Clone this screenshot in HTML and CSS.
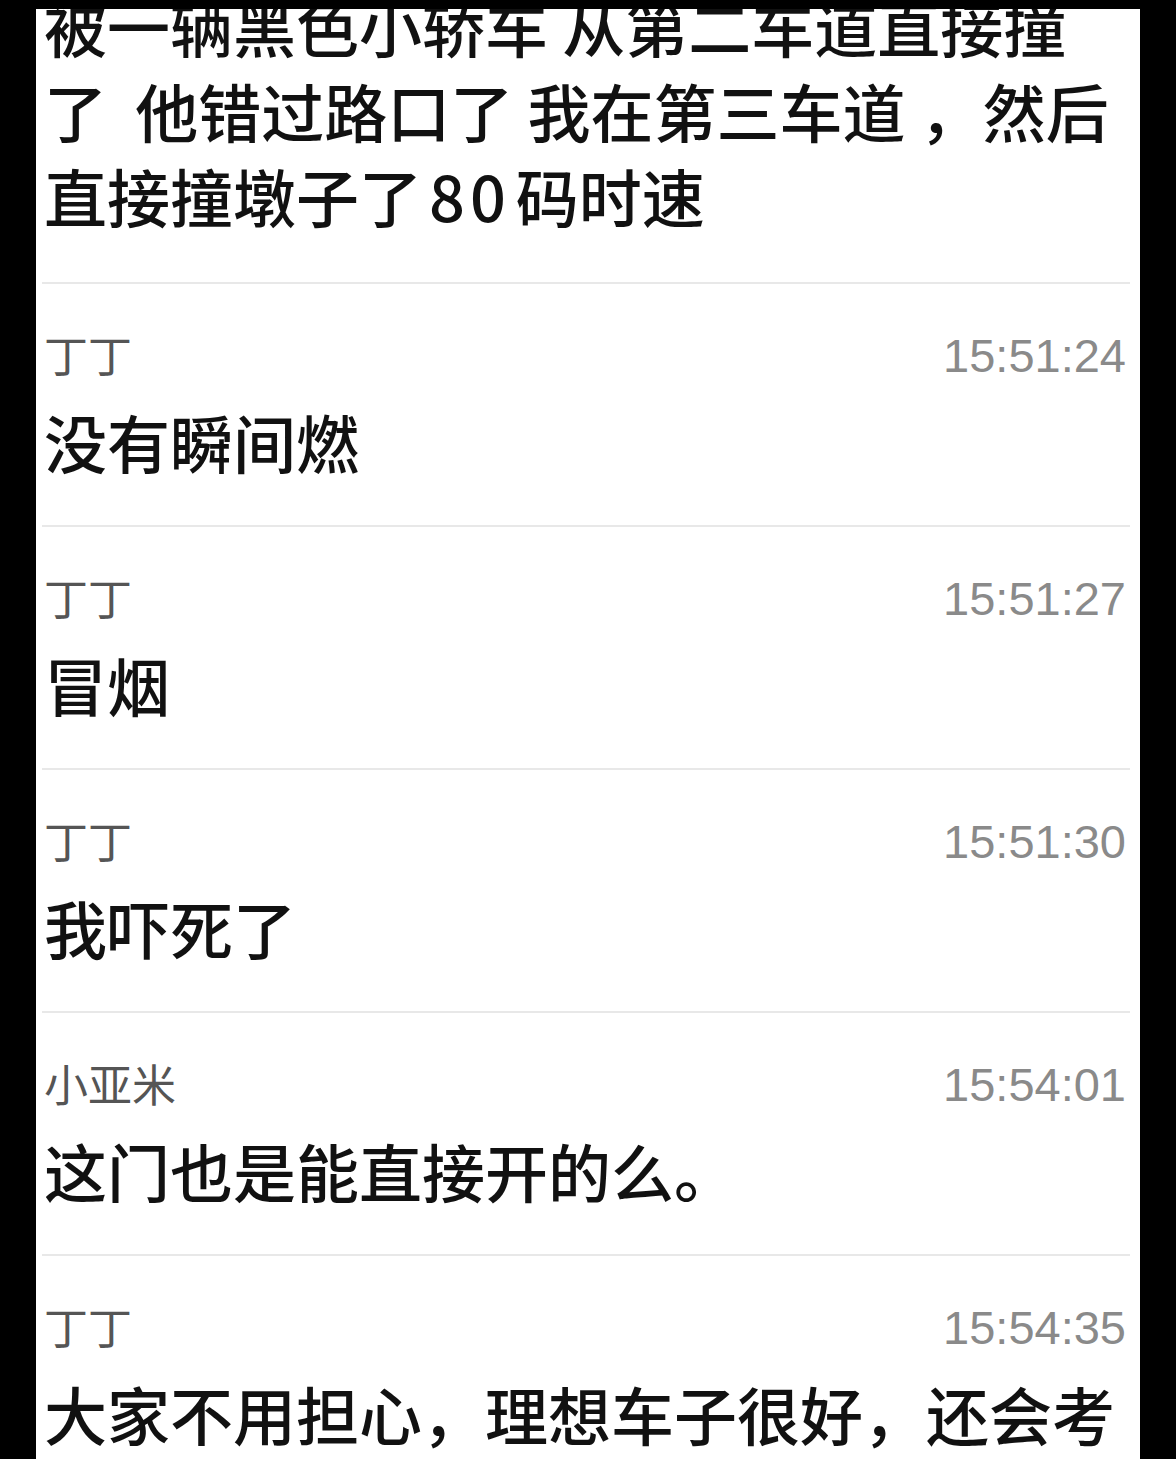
FILE: index.html
```html
<!DOCTYPE html>
<html lang="zh-CN">
<head>
<meta charset="utf-8">
<title>聊天记录</title>
<link rel="stylesheet" href="styles.css">
</head>
<body>
<div class="screen">
  <div class="first">
    <p class="text">被一辆黑色小轿车 从第二车道直接撞<br>了&nbsp; 他错过路口了 我在第三车道 ，然后<br>直接撞墩子了<span class="num">80</span>码时速</p>
  </div>
  <div class="msg">
    <div class="meta"><span class="name">丁丁</span><span class="time">15:51:24</span></div>
    <p class="text">没有瞬间燃</p>
  </div>
  <div class="msg">
    <div class="meta"><span class="name">丁丁</span><span class="time">15:51:27</span></div>
    <p class="text">冒烟</p>
  </div>
  <div class="msg">
    <div class="meta"><span class="name">丁丁</span><span class="time">15:51:30</span></div>
    <p class="text">我吓死了</p>
  </div>
  <div class="msg">
    <div class="meta"><span class="name">小亚米</span><span class="time">15:54:01</span></div>
    <p class="text">这门也是能直接开的么。</p>
  </div>
  <div class="msg">
    <div class="meta"><span class="name">丁丁</span><span class="time">15:54:35</span></div>
    <p class="text">大家不用担心，理想车子很好，还会考</p>
  </div>
</div>
</body>
</html>
```
FILE: styles.css
```css
html, body {
  margin: 0;
  padding: 0;
  background: #000;
}
body {
  width: 1176px;
  height: 1459px;
  overflow: hidden;
  padding-top: 9px;
  box-sizing: border-box;
}
.screen {
  margin-left: 36px;
  width: 1104px;
  height: 1450px;
  background: #fff;
  overflow: hidden;
  font-family: "Noto Sans CJK SC", "Noto Sans", sans-serif;
}
.text {
  margin: 0;
  padding-left: 8px;
  font-size: 63px;
  font-weight: 500;
  line-height: 85px;
  color: #111;
  white-space: nowrap;
}
.num {
  letter-spacing: 5px;
  padding-left: 7px;
  padding-right: 5px;
}
.first {
  margin-top: -27px;
  padding-bottom: 45px;
}
.msg {
  margin: 0 10px 0 6px;
  border-top: 2px solid #e8e8e8;
  padding-top: 40px;
  padding-bottom: 42px;
  height: 243px;
  box-sizing: border-box;
}
.msg .text {
  padding-left: 2px;
}
.meta {
  display: flex;
  justify-content: space-between;
  align-items: flex-start;
  height: 74px;
  padding-left: 2px;
}
.name {
  font-size: 44px;
  line-height: 60px;
  color: #555;
}
.time {
  font-family: "Liberation Sans", Arial, sans-serif;
  font-size: 47px;
  line-height: 60px;
  padding-top: 2px;
  margin-right: 4px;
  color: #8a8a8a;
}
```
